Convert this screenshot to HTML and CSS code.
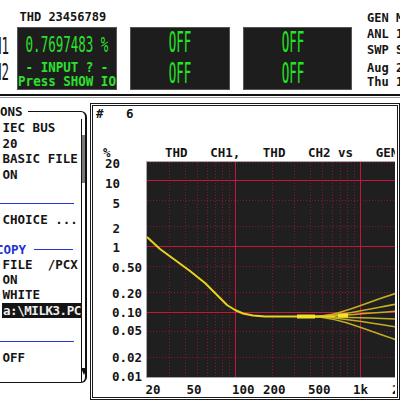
FILE: index.html
```html
<!DOCTYPE html>
<html lang="en">

<head>
    <meta charset="UTF-8">
    <meta name="viewport" content="width=device-width, initial-scale=1.0">
    <title>THD Sweep</title>
    <link rel="stylesheet" href="styles.css">
</head>

<body>
    <header class="top">
        <div class="ch">
            <span class="tall">H1</span>
            <span class="tall">H2</span>
        </div>
        <div class="meter">
            <div class="meter-head">THD 23456789</div>
            <div class="screen">
                <div class="value"><span>0.7697483 %</span></div>
                <div class="msg"><span>- INPUT ? -</span></div>
                <div class="hint"><span>Press SHOW IO</span></div>
            </div>
        </div>
        <div class="meter">
            <div class="meter-head"></div>
            <div class="screen">
                <div class="off"><span>OFF</span></div>
                <div class="off"><span>OFF</span></div>
            </div>
        </div>
        <div class="meter meter-wide">
            <div class="meter-head"></div>
            <div class="screen">
                <div class="off"><span>OFF</span></div>
                <div class="off"><span>OFF</span></div>
            </div>
        </div>
        <div class="status">
            <div class="status-group">
                <div>GEN MONO</div>
                <div>ANL 1 CH</div>
                <div>SWP SINGLE</div>
            </div>
            <div class="status-group clock">
                <div>Aug 21 1996</div>
                <div>Thu 10:25</div>
            </div>
        </div>
    </header>
    <div class="divider"></div>

    <div class="main">
        <fieldset class="options">
            <legend>ONS</legend>
            <div class="opt-body">
                <div class="opt-list">
                    <div class="opt">IEC BUS</div>
                    <div class="opt">20</div>
                    <div class="opt">BASIC FILE</div>
                    <div class="opt">ON</div>
                    <div class="sep sep-first"></div>
                    <div class="opt">CHOICE ...</div>
                    <div class="group-title"><span>COPY</span><span class="rule"></span></div>
                    <div class="opt opt-tight">FILE  /PCX</div>
                    <div class="opt opt-tight">ON</div>
                    <div class="opt opt-tight">WHITE</div>
                    <div class="opt opt-tight selected"><span class="cursor">a</span>:\MILK3.PC</div>
                    <div class="sep sep-last"></div>
                    <div class="opt">OFF</div>
                </div>
                <div class="scroll">
                    <div class="thumb"></div>
                    <div class="arrow"></div>
                </div>
            </div>
        </fieldset>

        <div class="chart">
            <svg class="graph" width="302" height="291" viewBox="98 106 302 291">
                <text x="101" y="118" xml:space="preserve">#   6</text>
                <text x="108" y="157">%</text>
                <text x="170" y="156.5" xml:space="preserve">THD   CH1,   THD   CH2 vs   GEN</text>

                <rect class="plot" x="151.5" y="161.5" width="260" height="216"/>
                <!-- dotted sub-divisions, then the decade lines -->
                <path class="grid-minor" d="M174.5 162V377M190.5 162V377M202.5 162V377M212.5 162V377M220.5 162V377M227.5 162V377M234.5 162V377M277.5 162V377M299.5 162V377M315.5 162V377M327.5 162V377M337.5 162V377M345.5 162V377M352.5 162V377M359.5 162V377"/>
                <path class="grid-minor" d="M152 162.5H411M152 200.5H411M152 226.5H411M152 266.5H411M152 292.5H411M152 331.5H411M152 357.5H411"/>
                <path class="grid-major" d="M240.5 162V377M365.5 162V377M152 180.5H411M152 246.5H411M152 312.5H411"/>

                <!-- measured traces -->
                <g class="trace-fan">
                    <path d="M318 316.5C345 316 366 304 402 293"/>
                    <path d="M318 316.5C345 316 370 310 402 304"/>
                    <path d="M318 316.5C345 316.5 372 313 402 311"/>
                    <path d="M318 316.5C345 317 372 318 402 319"/>
                    <path d="M318 316.5C345 317.5 370 322 402 327"/>
                    <path d="M318 316.5C345 318 368 329 402 340"/>
                </g>
                <polyline class="trace" points="152,237 165,249 180,260 195,271 210,283 222,295 232,305 240,310 248,313.5 258,315.5 270,316.5 340,316.5"/>
                <path class="trace-hot" d="M302 316.5H320M343 315.5H353"/>

                <g class="axis-y">
                    <text x="125" y="167.5" text-anchor="end">20</text>
                    <text x="125" y="187.5" text-anchor="end">10</text>
                    <text x="125" y="207.5" text-anchor="end">5</text>
                    <text x="125" y="232.5" text-anchor="end">2</text>
                    <text x="125" y="251.5" text-anchor="end">1</text>
                    <text x="117" y="271.5">0.50</text>
                    <text x="117" y="297.5">0.20</text>
                    <text x="117" y="316.5">0.10</text>
                    <text x="117" y="334.5">0.05</text>
                    <text x="117" y="361.5">0.02</text>
                    <text x="117" y="380.5">0.01</text>
                </g>
                <g class="axis-x">
                    <text x="150.5" y="393.5">20</text>
                    <text x="191.5" y="393.5">50</text>
                    <text x="237" y="393.5">100</text>
                    <text x="268" y="393.5">200</text>
                    <text x="313" y="393.5">500</text>
                    <text x="358" y="393.5">1k</text>
                    <text x="397" y="393.5">2k</text>
                </g>
            </svg>
        </div>
    </div>
</body>

</html>
```

FILE: styles.css
```css
* {
    box-sizing: border-box;
}

body {
    margin: 0;
    width: 400px;
    height: 400px;
    overflow: hidden;
    background: #fff;
    color: #151515;
    font-family: "DejaVu Sans Mono", "Liberation Mono", monospace;
    font-size: 12.5px;
    font-weight: bold;
}

/* ---- readouts along the top ---- */

.top {
    display: flex;
    height: 94px;
    white-space: nowrap;
}

.ch {
    width: 17px;
    padding: 33px 8px 0 0;
    display: flex;
    flex-direction: column;
    align-items: flex-end;
    overflow: hidden;
    line-height: 25.5px;
    font-weight: normal;
}

.tall {
    display: inline-block;
    transform: scaleY(1.9);
}

.meter {
    width: 100px;
    margin-right: 13px;
    display: flex;
    flex-direction: column;
}

.meter-wide {
    width: 109px;
    margin-right: 15px;
}

.meter-wide .screen {
    padding-right: 9px;
}

.meter-head {
    height: 27px;
    line-height: 35px;
    padding-left: 2.5px;
    font-size: 12px;
}

.screen {
    height: 63px;
    background: #1d1d1d;
    border: 1px solid #555;
    color: #2ee02e;
    display: flex;
    flex-direction: column;
    align-items: center;
}

.screen span {
    display: inline-block;
}

.value {
    margin-top: 2px;
    line-height: 30px;
    font-weight: normal;
}

.value span {
    transform: scaleY(1.75);
}

.msg {
    line-height: 15px;
}

.hint {
    line-height: 14px;
}

.msg span,
.hint span {
    transform: scaleY(1.1);
}

.off {
    line-height: 30.5px;
    font-weight: normal;
    color: #22e622;
}

.off span {
    transform: scaleY(2.2);
}

.status {
    flex: 1;
    overflow: hidden;
    padding-top: 9.5px;
    font-size: 12px;
    line-height: 16px;
}

.clock {
    margin-top: 3.5px;
    line-height: 14px;
}

.divider {
    height: 4px;
    border-top: 2px solid #111;
    border-bottom: 1px solid #999;
}

/* ---- option panel and graph ---- */

.main {
    display: flex;
    align-items: flex-start;
}

.options {
    width: 92px;
    margin: 6px 0 0;
    padding: 0;
    border: 1px solid #111;
    border-left: none;
    border-right-width: 2px;
    border-radius: 0 6px 6px 0;
    min-width: 0;
}

.options legend {
    margin: 0;
    padding: 0 5px 0 0;
    line-height: 15px;
}

.opt-body {
    display: flex;
    height: 263px;
}

.opt-list {
    width: 86px;
    padding-top: 1px;
    overflow: hidden;
}

.opt {
    line-height: 15.5px;
    padding-left: 2.5px;
    white-space: pre;
}

.opt-tight {
    line-height: 15px;
}

.sep {
    border-top: 1px solid #2636d4;
    margin-right: 7px;
}

.sep-first {
    margin-top: 21px;
    margin-bottom: 8px;
}

.sep-last {
    margin-top: 23px;
    margin-bottom: 7.5px;
}

.group-title {
    display: flex;
    align-items: center;
    margin: 14px 0 0 -4px;
    line-height: 15.5px;
    color: #2233cc;
}

.group-title .rule {
    flex: 1;
    margin: 0 8px;
    border-top: 1px solid #2636d4;
}

.selected {
    margin: 1px 0 0 2px;
    padding-left: 1px;
    background: #141414;
    color: #eee;
    letter-spacing: -0.45px;
}

.cursor {
    border-bottom: 1px solid #fff;
}

.scroll {
    width: 4px;
    border-left: 1px solid #111;
    display: flex;
    flex-direction: column;
    align-items: center;
}

.thumb {
    width: 3px;
    height: 48px;
    margin-top: 16px;
    background: #7a7a7a;
}

.arrow {
    margin-top: auto;
    margin-bottom: 7px;
    width: 0;
    height: 0;
    border-top: 7px solid #111;
    border-left: 3.5px solid transparent;
    border-right: 3.5px solid transparent;
}

.chart {
    width: 310px;
    height: 297px;
    margin: 5px 0 0 3px;
    border: 3px double #1a1a1a;
    flex-shrink: 0;
}

.graph {
    display: block;
    font-family: "DejaVu Sans Mono", "Liberation Mono", monospace;
    font-size: 12.5px;
    font-weight: bold;
}

.graph text {
    fill: #151515;
}

.plot {
    fill: #1f1f1f;
    stroke: #a8a8a8;
    stroke-width: 1;
}

.grid-minor {
    stroke: #8e1232;
    stroke-width: 1;
    stroke-dasharray: 1 2;
    fill: none;
    shape-rendering: crispEdges;
}

.grid-major {
    stroke: #c81438;
    stroke-width: 1;
    fill: none;
    shape-rendering: crispEdges;
}

.trace {
    fill: none;
    stroke: #e6d41e;
    stroke-width: 2;
    stroke-linejoin: round;
}

.trace-fan path {
    fill: none;
    stroke: #c2ae22;
    stroke-width: 1.5;
}

.trace-hot {
    stroke: #f2e22a;
    stroke-width: 4;
}
```
